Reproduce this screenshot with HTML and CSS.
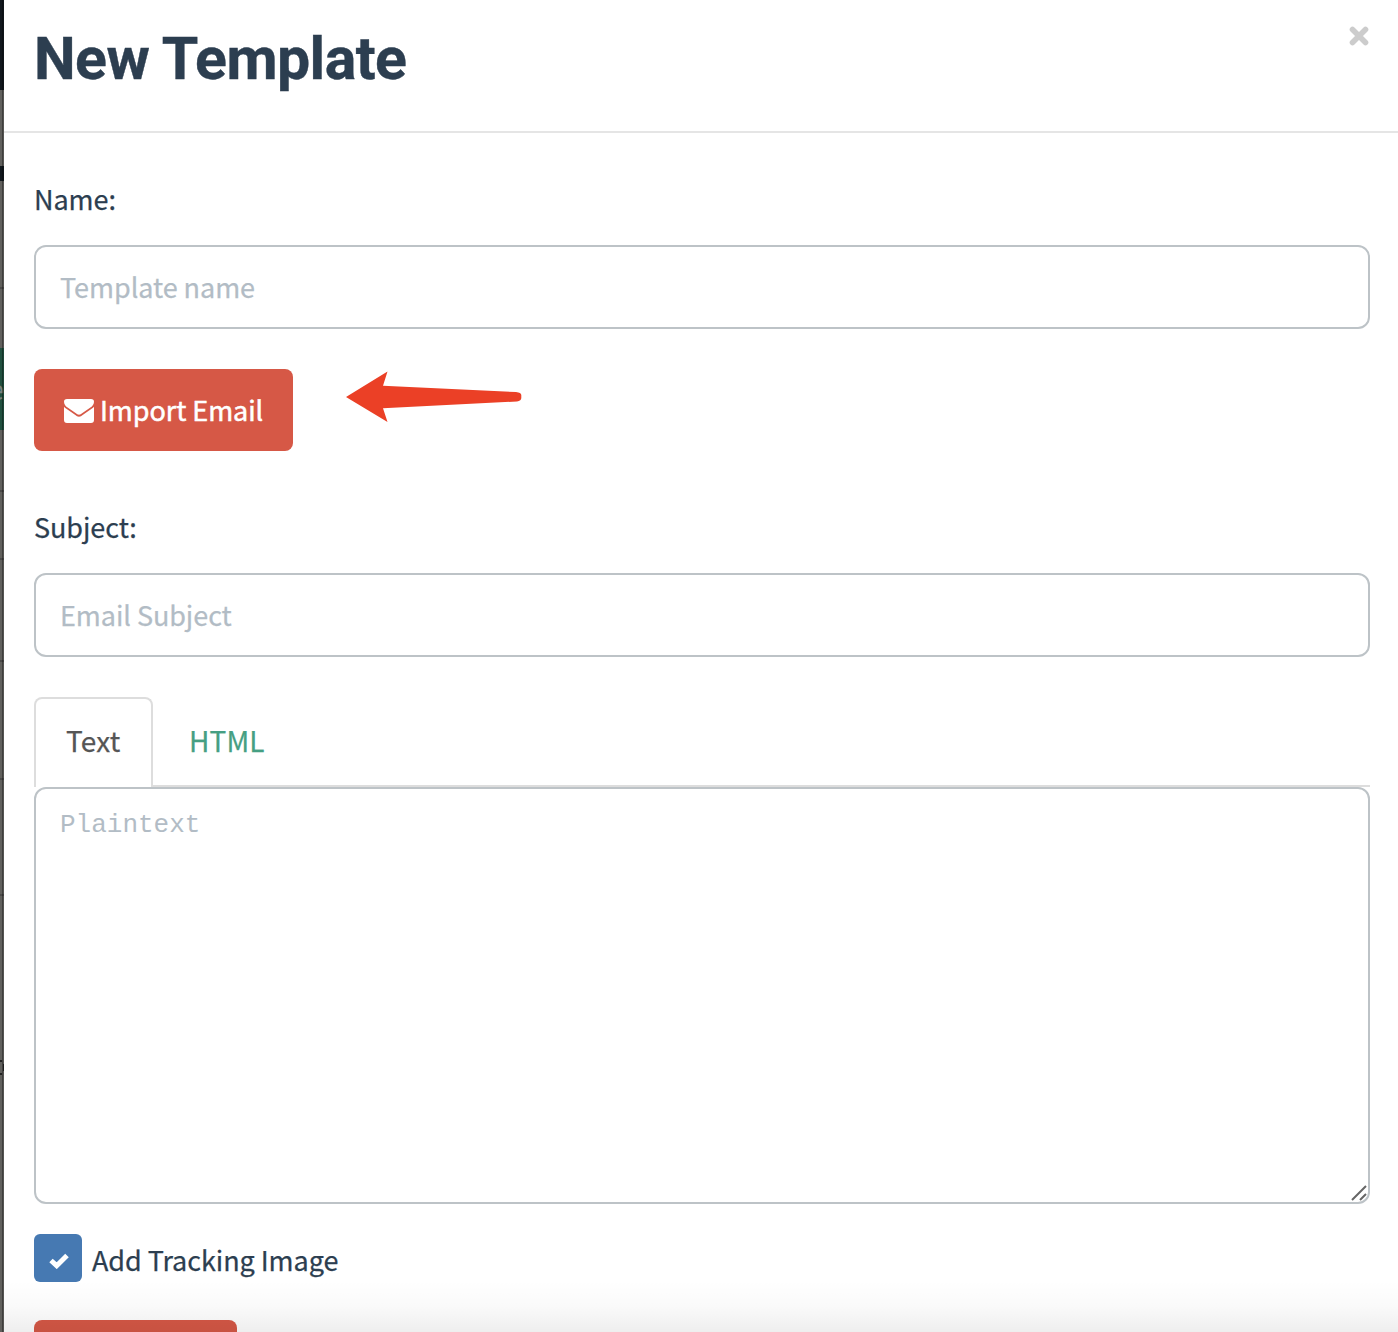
FILE: index.html
```html
<!DOCTYPE html>
<html lang="en">
<head>
<meta charset="utf-8">
<title>New Template</title>
<link rel="stylesheet" href="styles.css">
</head>
<body>
<div class="page">
  <div class="backdrop" aria-hidden="true">
    <div class="bar bar-nav"></div>
    <div class="bar bar-top"></div>
    <div class="bar bar-edge"></div>
    <div class="bar bar-side"></div>
    <div class="bar bar-button">e</div>
    <div class="bar bar-line"></div>
    <div class="bar bar-line"></div>
    <div class="bar bar-rows"></div>
    <div class="bar bar-table"></div>
    <div class="bar bar-cell"></div>
    <div class="bar bar-rest"></div>
  </div>
  <main class="modal">
    <header class="modal-header">
      <h1 class="modal-title">New Template</h1>
      <button class="close" aria-label="Close"><svg viewBox="0 0 20 20" width="20" height="20"><path d="M3.500 3.500 16.500 16.500M16.500 3.500 3.500 16.500"/></svg></button>
    </header>
    <form class="modal-body">
      <label class="label" for="name">Name:</label>
      <input class="field" id="name" type="text" placeholder="Template name">
      <div class="import-row">
        <button class="button" type="button">
          <svg class="envelope" viewBox="0 0 30 24" width="30" height="24"><path d="M3 0H27Q30 0 30 2.7C30 5.3 28.5 7 26.4 8.5L18.8 13.8C17.3 14.9 16.1 15.8 15 15.8S12.7 14.9 11.2 13.8L3.6 8.5C1.5 7 0 5.3 0 2.7Q0 0 3 0Z"/><path d="M0 7.8Q.9 8.8 2 9.6L11 15.8C12.4 16.8 13.6 17.8 15 17.8S17.6 16.8 19 15.8L28 9.6Q29.1 8.8 30 7.8V21Q30 24 27 24H3Q0 24 0 21Z"/></svg>
          <span class="button-text">Import Email</span>
        </button>
        <svg class="arrow" viewBox="0 0 176 52" width="176" height="52"><path d="M0 26 41.5 .5 37 14.8 170 21Q175.300 21.500 175.300 24V27Q175.300 29.800 171 30.500L37 37.200 41.500 51Z"/></svg>
      </div>
      <label class="label" for="subject">Subject:</label>
      <input class="field" id="subject" type="text" placeholder="Email Subject">
      <nav class="tabs">
        <a class="tab tab-active">Text</a>
        <a class="tab">HTML</a>
      </nav>
      <div class="editor">
        <textarea class="plaintext" placeholder="Plaintext"></textarea>
        <svg class="grip" viewBox="0 0 16 16" width="16" height="16"><path d="M1 15 15 1M9 15 15 9"/></svg>
      </div>
      <div class="tracking">
        <span class="checkbox"><svg viewBox="0 0 20 16" width="20" height="16"><path d="M2 7.500 7.700 12.700 18 2.500"/></svg></span>
        <span class="tracking-text">Add Tracking Image</span>
      </div>
      <div class="button button-files"></div>
    </form>
  </main>
</div>
</body>
</html>
```
FILE: styles.css
```css
* { box-sizing: border-box; }

body {
  margin: 0;
  background: #fff;
  color: #2c3e50;
  font: 27px/42px "Noto Sans CJK SC", "Noto Sans", sans-serif;
  letter-spacing: -.06px;
  -webkit-text-stroke: .25px currentColor;
}

.page {
  display: flex;
  position: relative;
  height: 1332px;
  overflow: hidden;
}

.page::after {
  content: "";
  position: absolute;
  inset: auto 0 0 4px;
  height: 52px;
  background: linear-gradient(rgba(0, 0, 0, 0), rgba(0, 0, 0, .02) 50%, rgba(0, 0, 0, .065));
}

.backdrop {
  position: relative;
  display: flex;
  flex-direction: column;
  width: 4px;
  flex: none;
  overflow: hidden;
  background: #61605d;
}

.backdrop::after {
  content: "";
  position: absolute;
  inset: 0 0 0 2px;
  background: linear-gradient(90deg, rgba(0, 0, 0, .35) 50%, rgba(0, 0, 0, .12) 50%);
}

.bar { flex: none; }
.bar-nav { height: 90px; background: #11181d; }
.bar-top { height: 76px; }
.bar-edge { height: 15px; background: #11181d; }
.bar-side { height: 167px; border-bottom: 0; background: linear-gradient(#4b4a49, #4b4a49) 0 106px / 4px 2px no-repeat; }
.bar-button {
  display: flex;
  justify-content: flex-end;
  align-items: center;
  height: 82px;
  background: #21503f;
  color: #78837f;
}
.bar-line { height: 62px; border-bottom: 2px solid #4b4a49; }
.bar-line + .bar-line { height: 68px; }
.bar-rows { height: 102px; border-bottom: 2px solid #4b4a49; }
.bar-table { height: 118px; border-bottom: 2px solid #4b4a49; }
.bar-cell { height: 116px; border-bottom: 2px solid #4b4a49; }
.bar-rest {
  flex: 1;
  background:
    linear-gradient(#222, #222) 0 164px / 2px 2px no-repeat,
    linear-gradient(#222, #222) 3px 168px / 1px 7px no-repeat,
    linear-gradient(#222, #222) 0 177px / 2px 2px no-repeat;
}

.modal {
  flex: 1;
  min-width: 0;
}

.modal-header {
  display: flex;
  justify-content: space-between;
  align-items: flex-start;
  height: 133px;
  padding: 26px 29px 0 30px;
  border-bottom: 2px solid #e5e5e5;
}

.modal-title {
  margin: 0;
  font: 700 59px/66px Roboto, sans-serif;
  letter-spacing: -.55px;
  -webkit-text-stroke: .4px currentColor;
}

.close {
  display: flex;
  padding: 0;
  border: 0;
  background: none;
}

.close svg {
  fill: none;
  stroke: #ccc;
  stroke-width: 5.6;
  stroke-linecap: round;
}

.modal-body {
  display: flex;
  flex-direction: column;
  padding: 45px 28px 0 30px;
}

.label {
  height: 42px;
  margin-bottom: 25px;
}

.field,
.plaintext {
  width: 100%;
  border: 2px solid #bdc3c7;
  border-radius: 12px;
  background: #fff;
  outline: 0;
}

.field {
  height: 84px;
  padding: 0 24px 2px;
  font: inherit;
  letter-spacing: inherit;
}

::placeholder {
  color: #b2bcc5;
  opacity: 1;
}

.import-row {
  display: flex;
  align-items: flex-start;
  gap: 53px;
  margin: 40px 0 55px;
}

.button {
  display: flex;
  align-items: center;
  gap: 6px;
  width: 259px;
  height: 82px;
  padding: 2px 30px 0;
  border: 0;
  border-radius: 8px;
  background: #d65846;
  color: #fff;
  font: inherit;
  letter-spacing: inherit;
  white-space: nowrap;
  -webkit-text-stroke-width: .5px;
}

.button-text { padding-bottom: 2px; }

.envelope { flex: none; fill: #fff; }

.arrow {
  margin-top: 2px;
  fill: #eb4026;
}

.tabs {
  display: flex;
  gap: 4px;
  height: 90px;
  margin-top: 40px;
  padding-bottom: 1px;
  background: linear-gradient(#ddd, #ddd) 0 88px / 100% 2px no-repeat;
}

.tab {
  height: 90px;
  padding: 20px 30px 0;
  border: 2px solid transparent;
  border-bottom: 0;
  border-radius: 8px 8px 0 0;
  color: #469f83;
  font-size: 28px;
  letter-spacing: .15px;
  -webkit-text-stroke: .25px currentColor;
}

.tab-active {
  width: 119px;
  border-color: #ddd;
  background: #fff;
  color: #555;
}

.editor {
  position: relative;
  height: 417px;
}

.plaintext {
  display: block;
  height: 417px;
  padding: 18px 24px;
  resize: none;
  font: 26px/36px "Courier New", "Liberation Mono", monospace;
  -webkit-text-stroke: 0;
}

.grip {
  position: absolute;
  right: 3px;
  bottom: 3px;
  fill: none;
  stroke: #666;
  stroke-width: 2;
}

.tracking {
  display: flex;
  align-items: center;
  gap: 10px;
  height: 48px;
  margin: 30px 0 38px;
}

.tracking-text { padding-top: 4px; }

.checkbox {
  display: flex;
  align-items: center;
  justify-content: center;
  width: 48px;
  height: 48px;
  padding: 5px 0 0 2px;
  border-radius: 6px;
  background: #4679b2;
}

.checkbox svg {
  fill: none;
  stroke: #fff;
  stroke-width: 5;
}

.button-files { width: 203px; }
```
